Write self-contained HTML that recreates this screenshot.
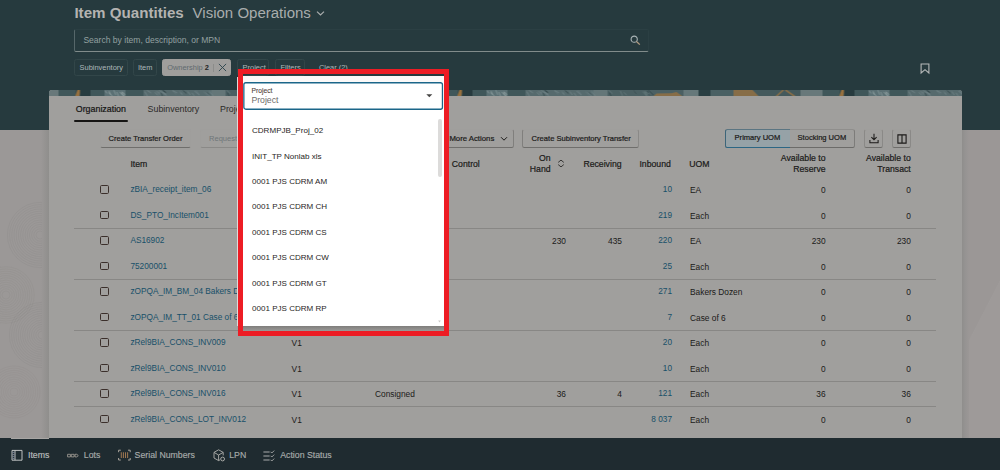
<!DOCTYPE html>
<html>
<head>
<meta charset="utf-8">
<title>Item Quantities</title>
<style>
*{box-sizing:border-box;margin:0;padding:0}
html,body{width:1000px;height:470px;overflow:hidden}
body{position:relative;background:#9b9897;font-family:"Liberation Sans",sans-serif;color:#1b1a19;font-size:8.35px}
.abs,.t{position:absolute}
.t{white-space:nowrap;line-height:1;transform:translateY(-50%)}
.r{transform:translate(-100%,-50%)}
/* header */
#hdr{left:0;top:0;width:1000px;height:130px;background:#263a3e}
#title{left:74.4px;top:12.8px;font-size:15.15px;font-weight:bold;color:#b4b3b1}
#org{left:192.6px;top:12.8px;font-size:15.03px;color:#a9adad}
#search{left:74px;top:28.5px;width:575px;height:23px;border:1px solid #2b3f43;border-bottom:1px solid #818c8b;border-left:1px solid #56676a;border-radius:2px}
#ph{left:83.4px;top:40.2px;font-size:8.56px;color:#93a0a0}
.chip{position:absolute;top:59px;height:17px;border:1px solid #324649;border-radius:2.5px}
.chip span{position:absolute;top:50%;white-space:nowrap;line-height:1;transform:translateY(-50%);font-size:7.45px;color:#adb8ba}
/* card */
#bgR{left:962px;top:130px;width:38px;height:308px;background:linear-gradient(90deg,#8f8e8c 0,#959392 3px,#9b9796 7px,#9b9796 100%)}
#shadowL{left:41px;top:130px;width:8px;height:308px;background:linear-gradient(90deg,rgba(140,139,137,0),#8f8e8c)}
#card{left:49px;top:90px;width:913px;height:348px;background:#a09f9d;border-radius:3px 3px 0 0;overflow:hidden}
#banner{left:0;top:0;width:913px;height:6.4px}
.tab{font-size:8.86px;color:#2b2a28}
.btn{position:absolute;top:129px;height:18.6px;border:1px solid #9f9e9c;border-bottom:1px solid #6f6e6c;border-radius:2.5px}
.btn span,.seg span{position:absolute;top:calc(50% + 0.7px);white-space:nowrap;line-height:1;transform:translateY(-50%);font-size:7.55px;color:#1b1a19;-webkit-text-stroke:0.2px #1b1a19}
.th{font-size:8.7px;color:#1b1a19;-webkit-text-stroke:0.2px #1b1a19}
.lnk{color:#185069;font-size:8.27px}
.sep{position:absolute;left:74px;width:862px;height:1px;background:#888785}
.cb{position:absolute;left:100.2px;width:8.8px;height:8.6px;border:1px solid #3b2f2b;border-radius:1.6px}
/* nav */
#nav{left:0;top:437.6px;width:1000px;height:32.4px;background:#1f2b30}
.nv{font-size:8.75px;color:#a7abab;-webkit-text-stroke:0.15px #a7abab}
/* popup */
#red{left:238px;top:69px;width:211px;height:267px;border:5px solid #ed1c24}
#pop{left:243px;top:76px;width:201px;height:250.3px;background:#fff}
#popL{left:237px;top:76.5px;width:1px;height:249.5px;background:#dddbd9}
#popsh{left:243px;top:326.3px;width:201px;height:4.7px;background:linear-gradient(180deg,#7f7e7c,#9a9997)}
#poptop{left:243px;top:76px;width:201px;height:6.2px;background:#fbf9f8}
#field{left:243.2px;top:82.2px;width:199.6px;height:27.6px;border:1px solid #1d6a8b;border-radius:2.5px;background:#fff}
.li{font-size:8.06px;color:#1f1e1d;left:252px}
</style>
</head>
<body>
<div id="hdr" class="abs"></div>
<div id="title" class="t">Item Quantities</div>
<div id="org" class="t">Vision Operations</div>
<svg class="abs" style="left:316.2px;top:9.6px" width="9" height="7" viewBox="0 0 9 7"><path d="M1 1.6 L4.5 5 L8 1.6" fill="none" stroke="#a9adad" stroke-width="1.2"/></svg>
<div id="search" class="abs"></div>
<div id="ph" class="t">Search by item, description, or MPN</div>
<svg class="abs" style="left:630px;top:35.3px" width="11" height="11" viewBox="0 0 11 11"><circle cx="4.2" cy="4.2" r="3.1" fill="none" stroke="#aab4b6" stroke-width="1.1"/><path d="M6.5 6.5 L9.8 9.6" stroke="#b09a80" stroke-width="1.3" fill="none"/></svg>

<div class="chip" style="left:74px;width:53.6px"><span style="left:4.6px">Subinventory</span></div>
<div class="chip" style="left:132.6px;width:24.6px"><span style="left:4.4px">Item</span></div>
<div class="chip" style="left:162px;width:69.4px;background:#9f9e9c;border-color:#9f9e9c"><span style="left:4.2px;color:#5f6a6f">Ownership <b style="color:#262626">2</b></span>
 <i style="position:absolute;left:49.8px;top:4px;width:1px;height:7.6px;background:#8c8c8a"></i>
 <svg style="position:absolute;left:55px;top:3.4px" width="9" height="9" viewBox="0 0 9 9"><path d="M0.9 0.9 L8.1 8.1 M8.1 0.9 L0.9 8.1" stroke="#2f474f" stroke-width="0.95" fill="none"/></svg>
</div>
<div class="chip" style="left:237px;width:32.4px"><span style="left:4.6px">Project</span></div>
<div class="chip" style="left:275.2px;width:29.6px"><span style="left:4.2px">Filters</span></div>
<div class="t" style="left:319px;top:67.6px;font-size:7.4px;color:#adb8ba">Clear (2)</div>
<svg class="abs" style="left:919.5px;top:62.5px" width="10" height="12" viewBox="0 0 10 12"><path d="M1.1 1 H8.9 V10 L5 6.7 L1.1 10 Z" fill="none" stroke="#b6b9b9" stroke-width="1.1" stroke-linejoin="miter"/></svg>

<div id="bgR" class="abs"></div>
<svg class="abs" style="left:0;top:130px" width="42" height="308" viewBox="0 0 42 308"><g fill="none" stroke="rgba(110,108,106,0.22)" stroke-width="0.5"><circle cx="40" cy="105" r="4.0"/><circle cx="40" cy="105" r="6.2"/><circle cx="40" cy="105" r="8.4"/><circle cx="40" cy="105" r="10.6"/><circle cx="40" cy="105" r="12.8"/><circle cx="40" cy="105" r="15.0"/><circle cx="40" cy="105" r="17.2"/><circle cx="40" cy="105" r="19.4"/><circle cx="40" cy="105" r="21.6"/><circle cx="40" cy="105" r="23.8"/><circle cx="40" cy="105" r="26.0"/><circle cx="40" cy="105" r="28.2"/><circle cx="40" cy="105" r="30.4"/><circle cx="40" cy="105" r="32.6"/></g><g fill="none" stroke="rgba(110,108,106,0.2)" stroke-width="0.5"><circle cx="6" cy="165" r="4.0"/><circle cx="6" cy="165" r="6.2"/><circle cx="6" cy="165" r="8.4"/><circle cx="6" cy="165" r="10.6"/><circle cx="6" cy="165" r="12.8"/><circle cx="6" cy="165" r="15.0"/><circle cx="6" cy="165" r="17.2"/><circle cx="6" cy="165" r="19.4"/><circle cx="6" cy="165" r="21.6"/><circle cx="6" cy="165" r="23.8"/><circle cx="6" cy="165" r="26.0"/><circle cx="6" cy="165" r="28.2"/></g><g fill="none" stroke="rgba(110,108,106,0.22)" stroke-width="0.5"><circle cx="42" cy="205" r="4.0"/><circle cx="42" cy="205" r="6.2"/><circle cx="42" cy="205" r="8.4"/><circle cx="42" cy="205" r="10.6"/><circle cx="42" cy="205" r="12.8"/><circle cx="42" cy="205" r="15.0"/><circle cx="42" cy="205" r="17.2"/><circle cx="42" cy="205" r="19.4"/><circle cx="42" cy="205" r="21.6"/><circle cx="42" cy="205" r="23.8"/><circle cx="42" cy="205" r="26.0"/><circle cx="42" cy="205" r="28.2"/><circle cx="42" cy="205" r="30.4"/><circle cx="42" cy="205" r="32.6"/></g><g fill="none" stroke="rgba(110,108,106,0.16)" stroke-width="0.5"><circle cx="14" cy="262" r="4.0"/><circle cx="14" cy="262" r="6.2"/><circle cx="14" cy="262" r="8.4"/><circle cx="14" cy="262" r="10.6"/><circle cx="14" cy="262" r="12.8"/><circle cx="14" cy="262" r="15.0"/><circle cx="14" cy="262" r="17.2"/><circle cx="14" cy="262" r="19.4"/><circle cx="14" cy="262" r="21.6"/><circle cx="14" cy="262" r="23.8"/><circle cx="14" cy="262" r="26.0"/></g></svg>
<svg class="abs" style="left:969px;top:130px" width="31" height="308" viewBox="0 0 31 308"><path d="M31 150 L0 210 V308 H31 Z" fill="rgba(255,255,255,0.035)"/></svg>
<div id="shadowL" class="abs"></div>
<div id="card" class="abs"><svg id="banner" class="abs" style="left:0;top:0" width="913" height="6.4" viewBox="0 0 913 6.4" preserveAspectRatio="none"><defs><pattern id="bp" x="-12.5" y="0" width="382" height="7" patternUnits="userSpaceOnUse"><rect x="0.0" y="0" width="22.3" height="7" fill="#68787a"/><rect x="22.0" y="0" width="17.3" height="7" fill="#40575a"/><rect x="39.0" y="0" width="4.8" height="7" fill="#364b4e"/><path d="M41 0 L45 0 L42.4 7 L38.4 7 Z" fill="#96703f"/><rect x="43.5" y="0" width="10.8" height="7" fill="#273b3f"/><rect x="54.0" y="0" width="14.3" height="7" fill="#40575a"/><rect x="68.0" y="0" width="21.3" height="7" fill="#5b7074"/><rect x="89.0" y="0" width="18.3" height="7" fill="#40575a"/><rect x="107.0" y="0" width="68.3" height="7" fill="#566a6d"/><rect x="175.0" y="0" width="14.3" height="7" fill="#647678"/><rect x="189.0" y="0" width="45.3" height="7" fill="#4b6063"/><rect x="234.0" y="0" width="31.3" height="7" fill="#4b6063"/><rect x="265.0" y="0" width="15.3" height="7" fill="#66787a"/><rect x="280.0" y="0" width="12.3" height="7" fill="#2a3f43"/><rect x="292.0" y="0" width="23.3" height="7" fill="#4a6063"/><rect x="315.0" y="0" width="19.3" height="7" fill="#876d47"/><rect x="334.0" y="0" width="3.5" height="7" fill="#44595c"/><rect x="337.0" y="0" width="45.3" height="7" fill="#44595c"/><path d="M234 7 L238 3.6 L253 3.2 L258 2 L265 7 Z" fill="#876d47"/><path d="M334 0 L334 7 L341 7 Z" fill="#876d47"/><path d="M357 7 L365 0 M367 0 L377 7" stroke="#876d47" stroke-width="1.6" fill="none"/><path d="M122.6 0.3 l3.2 2.5" stroke="#708386" stroke-width="0.8"/><path d="M108.3 1.6 l2.9 5.0" stroke="#708386" stroke-width="0.8"/><path d="M121.6 1.6 l2.8 2.5" stroke="#708386" stroke-width="0.8"/><path d="M124.3 2.8 l2.1 3.9" stroke="#2e4346" stroke-width="0.8"/><path d="M159.8 0.6 l2.9 3.9" stroke="#62767a" stroke-width="0.8"/><path d="M170.4 2.5 l3.1 4.5" stroke="#2e4346" stroke-width="0.8"/><path d="M151.3 1.5 l2.5 3.4" stroke="#708386" stroke-width="0.8"/><path d="M169.3 2.5 l4.8 4.5" stroke="#708386" stroke-width="0.8"/><path d="M167.0 1.7 l4.6 4.5" stroke="#62767a" stroke-width="0.8"/><path d="M119.9 1.3 l2.9 3.4" stroke="#708386" stroke-width="0.8"/><path d="M127.1 2.4 l2.1 2.1" stroke="#62767a" stroke-width="0.8"/><path d="M172.8 1.6 l3.9 4.1" stroke="#708386" stroke-width="0.8"/><path d="M172.8 0.6 l3.2 2.6" stroke="#62767a" stroke-width="0.8"/><path d="M136.1 0.6 l3.3 3.8" stroke="#62767a" stroke-width="0.8"/><path d="M143.9 2.7 l2.3 2.2" stroke="#708386" stroke-width="0.8"/><path d="M125.3 1.7 l4.6 2.4" stroke="#708386" stroke-width="0.8"/><path d="M126.2 0.1 l3.1 2.2" stroke="#2e4346" stroke-width="0.8"/><path d="M155.5 2.9 l2.1 2.9" stroke="#708386" stroke-width="0.8"/><path d="M158.2 1.2 l4.8 3.9" stroke="#708386" stroke-width="0.8"/><path d="M126.4 0.6 l3.3 2.4" stroke="#2e4346" stroke-width="0.8"/><path d="M146.5 0.5 l3.7 3.1" stroke="#2e4346" stroke-width="0.8"/><path d="M118.2 2.4 l3.1 2.9" stroke="#708386" stroke-width="0.8"/><path d="M136.0 0.6 l4.7 2.3" stroke="#708386" stroke-width="0.8"/><path d="M110.6 0.5 l4.0 2.4" stroke="#708386" stroke-width="0.8"/><path d="M143.1 1.7 l3.0 2.1" stroke="#62767a" stroke-width="0.8"/><path d="M126.3 3.0 l4.0 2.6" stroke="#708386" stroke-width="0.8"/><path d="M72.6 1.2 l1.6 3.3" stroke="#8d9d9f" stroke-width="0.7"/><path d="M72.7 2.7 l3.2 3.5" stroke="#8d9d9f" stroke-width="0.7"/><path d="M68.6 0.8 l2.0 2.6" stroke="#8d9d9f" stroke-width="0.7"/><path d="M72.4 2.6 l1.8 2.2" stroke="#8d9d9f" stroke-width="0.7"/><path d="M85.6 1.7 l3.5 3.2" stroke="#8d9d9f" stroke-width="0.7"/><path d="M85.1 2.0 l3.1 4.2" stroke="#8d9d9f" stroke-width="0.7"/><path d="M77.4 0.3 l1.9 4.6" stroke="#8d9d9f" stroke-width="0.7"/><path d="M85.1 2.8 l2.2 4.0" stroke="#8d9d9f" stroke-width="0.7"/><path d="M83.2 1.9 l3.1 3.6" stroke="#8d9d9f" stroke-width="0.7"/><path d="M80.4 2.1 l2.0 4.8" stroke="#8d9d9f" stroke-width="0.7"/><path d="M230.1 0.2 l4.9 4.9" stroke="#2e4346" stroke-width="0.8"/><path d="M190.9 2.7 l2.4 4.9" stroke="#2e4346" stroke-width="0.8"/><path d="M226.4 2.1 l3.4 3.4" stroke="#63777a" stroke-width="0.8"/><path d="M228.9 0.7 l2.0 4.8" stroke="#2e4346" stroke-width="0.8"/><path d="M215.2 0.8 l3.2 4.3" stroke="#63777a" stroke-width="0.8"/><path d="M226.7 1.7 l4.6 2.6" stroke="#63777a" stroke-width="0.8"/><path d="M224.2 1.7 l4.4 4.7" stroke="#63777a" stroke-width="0.8"/><path d="M190.1 0.1 l3.8 3.5" stroke="#63777a" stroke-width="0.8"/><path d="M215.1 0.4 l3.1 4.3" stroke="#2e4346" stroke-width="0.8"/><path d="M201.8 1.0 l2.2 4.9" stroke="#63777a" stroke-width="0.8"/><path d="M205.4 2.4 l2.9 2.7" stroke="#63777a" stroke-width="0.8"/><path d="M225.8 1.2 l2.2 4.7" stroke="#63777a" stroke-width="0.8"/></pattern></defs><rect x="0" y="0" width="913" height="6.4" fill="url(#bp)"/></svg></div>

<!-- tabs -->
<div class="t tab" style="left:75.8px;top:108.6px;color:#151413;-webkit-text-stroke:0.2px #151413">Organization</div>
<div class="abs" style="left:74.4px;top:120px;width:53.4px;height:2px;border-radius:1px;background:#161514"></div>
<div class="t tab" style="left:147.6px;top:108.6px">Subinventory</div>
<div class="t tab" style="left:220px;top:108.6px">Project</div>

<!-- toolbar -->
<div class="btn" style="left:100px;width:91px"><span style="left:7.6px">Create Transfer Order</span></div>
<div class="btn" style="left:200px;width:60px;border-bottom-color:#8a8987"><span style="left:8px;color:#6f7679;-webkit-text-stroke:0">Request</span></div>
<div class="btn" style="left:440px;width:73.8px;border-right-color:#807f7d"><span style="left:8.4px;font-size:7.78px">More Actions</span>
 <svg style="position:absolute;left:59.2px;top:6.1px" width="8" height="6" viewBox="0 0 8 6"><path d="M1 1.2 L4 4.2 L7 1.2" fill="none" stroke="#1b1a19" stroke-width="1"/></svg></div>
<div class="btn" style="left:522px;width:117px;border-left-color:#807f7d;border-right-color:#8a8987"><span style="left:8.6px;font-size:7.6px">Create Subinventory Transfer</span></div>

<div class="seg abs" style="left:725.2px;top:129px;width:130.2px;height:18.6px;border:1px solid #7d7c7a;border-top-color:#8f8e8c;border-bottom-color:#6c6b69;border-radius:2.5px">
 <div style="position:absolute;left:-1px;top:-1px;width:64.6px;height:18.6px;background:#96a2a7;border:1px solid #3d6579;border-top-color:#5b7582;border-bottom-color:#2c6684;border-right:none;border-radius:2.5px 0 0 2.5px"></div>
 <span style="left:8.4px;top:calc(50% + 0.2px)">Primary UOM</span><span style="left:71.4px;top:calc(50% + 0.2px)">Stocking UOM</span>
</div>
<div class="btn" style="left:863.8px;width:19.4px;border-left-color:#8a8987;border-right-color:#8a8987">
 <svg style="position:absolute;left:4.2px;top:3px" width="10" height="11" viewBox="0 0 10 11"><path d="M5 0.8 V6.6 M2.4 4.2 L5 6.8 L7.6 4.2 M0.9 7 V9.8 H9.1 V7" fill="none" stroke="#1b1a19" stroke-width="1.05"/></svg></div>
<div class="btn" style="left:892.2px;width:18.6px;border-left-color:#8a8987;border-right-color:#8a8987">
 <svg style="position:absolute;left:3.6px;top:3.6px" width="10" height="10" viewBox="0 0 10 10"><path d="M0.9 0.9 H9.1 V9.1 H0.9 Z M5 0.9 V9.1" fill="none" stroke="#1b1a19" stroke-width="1.1"/></svg></div>

<!-- table header -->
<div class="t th" style="left:130.4px;top:163.5px">Item</div>
<div class="t th" style="left:451.8px;top:163.5px">Control</div>
<div class="t th r" style="left:550.6px;top:158px">On</div>
<div class="t th r" style="left:550.6px;top:168.7px">Hand</div>
<svg class="abs" style="left:556.6px;top:159.4px" width="8" height="9" viewBox="0 0 8 9"><path d="M1.2 3.4 L4 1.1 L6.8 3.4 M1.2 5.6 L4 7.9 L6.8 5.6" fill="none" stroke="#2a2928" stroke-width="0.9"/></svg>
<div class="t th" style="left:583.4px;top:163.5px">Receiving</div>
<div class="t th" style="left:639.4px;top:163.5px">Inbound</div>
<div class="t th" style="left:689.2px;top:163.5px">UOM</div>
<div class="t th r" style="left:825.6px;top:158px">Available to</div>
<div class="t th r" style="left:825.6px;top:168.7px">Reserve</div>
<div class="t th r" style="left:910.8px;top:158px">Available to</div>
<div class="t th r" style="left:910.8px;top:168.7px">Transact</div>

<!-- rows -->
<div class="cb" style="top:185.0px"></div>
<div class="t lnk" style="left:130.4px;top:190.0px">zBIA_receipt_item_06</div>
<div class="t r lnk" style="left:672px;top:190.0px">10</div>
<div class="t" style="left:690px;top:190.0px">EA</div>
<div class="t r" style="left:825.6px;top:190.0px">0</div>
<div class="t r" style="left:910.8px;top:190.0px">0</div>
<div class="cb" style="top:210.5px"></div>
<div class="t lnk" style="left:130.4px;top:215.5px">DS_PTO_IncItem001</div>
<div class="t r lnk" style="left:672px;top:215.5px">219</div>
<div class="t" style="left:690px;top:215.5px">Each</div>
<div class="t r" style="left:825.6px;top:215.5px">0</div>
<div class="t r" style="left:910.8px;top:215.5px">0</div>
<div class="cb" style="top:236.0px"></div>
<div class="t lnk" style="left:130.4px;top:241.0px">AS16902</div>
<div class="t r" style="left:566px;top:241.0px">230</div>
<div class="t r" style="left:622px;top:241.0px">435</div>
<div class="t r lnk" style="left:672px;top:241.0px">220</div>
<div class="t" style="left:690px;top:241.0px">EA</div>
<div class="t r" style="left:825.6px;top:241.0px">230</div>
<div class="t r" style="left:910.8px;top:241.0px">230</div>
<div class="cb" style="top:261.5px"></div>
<div class="t lnk" style="left:130.4px;top:266.5px">75200001</div>
<div class="t r lnk" style="left:672px;top:266.5px">25</div>
<div class="t" style="left:690px;top:266.5px">Each</div>
<div class="t r" style="left:825.6px;top:266.5px">0</div>
<div class="t r" style="left:910.8px;top:266.5px">0</div>
<div class="cb" style="top:287.0px"></div>
<div class="t lnk" style="left:130.4px;top:292.0px">zOPQA_IM_BM_04 Bakers Dozen</div>
<div class="t r lnk" style="left:672px;top:292.0px">271</div>
<div class="t" style="left:690px;top:292.0px">Bakers Dozen</div>
<div class="t r" style="left:825.6px;top:292.0px">0</div>
<div class="t r" style="left:910.8px;top:292.0px">0</div>
<div class="cb" style="top:312.5px"></div>
<div class="t lnk" style="left:130.4px;top:317.5px">zOPQA_IM_TT_01 Case of 6</div>
<div class="t r lnk" style="left:672px;top:317.5px">7</div>
<div class="t" style="left:690px;top:317.5px">Case of 6</div>
<div class="t r" style="left:825.6px;top:317.5px">0</div>
<div class="t r" style="left:910.8px;top:317.5px">0</div>
<div class="cb" style="top:338.0px"></div>
<div class="t lnk" style="left:130.4px;top:343.0px">zRel9BIA_CONS_INV009</div>
<div class="t" style="left:291.6px;top:343.0px">V1</div>
<div class="t r lnk" style="left:672px;top:343.0px">20</div>
<div class="t" style="left:690px;top:343.0px">Each</div>
<div class="t r" style="left:825.6px;top:343.0px">0</div>
<div class="t r" style="left:910.8px;top:343.0px">0</div>
<div class="cb" style="top:363.5px"></div>
<div class="t lnk" style="left:130.4px;top:368.5px">zRel9BIA_CONS_INV010</div>
<div class="t" style="left:291.6px;top:368.5px">V1</div>
<div class="t r lnk" style="left:672px;top:368.5px">10</div>
<div class="t" style="left:690px;top:368.5px">Each</div>
<div class="t r" style="left:825.6px;top:368.5px">0</div>
<div class="t r" style="left:910.8px;top:368.5px">0</div>
<div class="cb" style="top:389.0px"></div>
<div class="t lnk" style="left:130.4px;top:394.0px">zRel9BIA_CONS_INV016</div>
<div class="t" style="left:291.6px;top:394.0px">V1</div>
<div class="t" style="left:375px;top:394.0px">Consigned</div>
<div class="t r" style="left:566px;top:394.0px">36</div>
<div class="t r" style="left:622px;top:394.0px">4</div>
<div class="t r lnk" style="left:672px;top:394.0px">121</div>
<div class="t" style="left:690px;top:394.0px">Each</div>
<div class="t r" style="left:825.6px;top:394.0px">36</div>
<div class="t r" style="left:910.8px;top:394.0px">36</div>
<div class="cb" style="top:414.5px"></div>
<div class="t lnk" style="left:130.4px;top:419.5px">zRel9BIA_CONS_LOT_INV012</div>
<div class="t" style="left:291.6px;top:419.5px">V1</div>
<div class="t r lnk" style="left:672px;top:419.5px">8 037</div>
<div class="t" style="left:690px;top:419.5px">Each</div>
<div class="t r" style="left:825.6px;top:419.5px">0</div>
<div class="t r" style="left:910.8px;top:419.5px">0</div>
<div class="sep" style="top:227.8px"></div>
<div class="sep" style="top:278.8px"></div>
<div class="sep" style="top:329.8px"></div>
<div class="sep" style="top:380.8px"></div>
<div class="sep" style="top:406.1px"></div>
<!-- /rows -->

<!-- nav -->
<div id="nav" class="abs"></div>
<div class="abs" style="left:11px;top:437.6px;width:38px;height:1.5px;background:#a8a6a4"></div>
<svg class="abs" style="left:11px;top:449.2px" width="12" height="12" viewBox="0 0 12 12"><path d="M1 1.4 H11 V11.2 H1 Z M4 1.4 V11.2" fill="none" stroke="#c6c8c8" stroke-width="0.95" stroke-linejoin="miter"/><path d="M1.6 3.4 H3.4 M1.6 5.4 H3.4 M1.6 7.4 H3.4 M1.6 9.4 H3.4" stroke="#8d97b0" stroke-width="0.8"/></svg>
<div class="t nv" style="left:28px;top:455.2px;color:#c4c6c6">Items</div>
<svg class="abs" style="left:66.6px;top:453.4px" width="12" height="5" viewBox="0 0 12 5"><path d="M0.6 1.3 H3.4 V3.9 H0.6 Z M4.3 1.3 H7.1 V3.9 H4.3 Z M8 1.3 H9.8 L11.3 2.6 L9.8 3.9 H8 Z" fill="none" stroke="#a9a49c" stroke-width="0.8"/></svg>
<div class="t nv" style="left:83.8px;top:455.2px">Lots</div>
<svg class="abs" style="left:117.6px;top:449.4px" width="13" height="12" viewBox="0 0 13 12"><path d="M0.6 3.2 V1.2 H2.8 M10 1.2 H12.2 V3.2 M12.2 9 V11 H10 M2.8 11 H0.6 V9" fill="none" stroke="#a9a49c" stroke-width="1"/><path d="M3.3 3.3 V8.9 M5.4 3.3 V8.9 M7.5 3.3 V8.9 M9.6 3.3 V8.9" stroke="#9b7550" stroke-width="1.05"/></svg>
<div class="t nv" style="left:134.6px;top:455.2px">Serial Numbers</div>
<svg class="abs" style="left:213px;top:449.4px" width="13" height="13" viewBox="0 0 13 13"><path d="M1 3.4 L5.6 0.8 L10.2 3.4 V6.4 M1 3.4 V9 L5.6 11.6 V6 L1 3.4 M5.6 6 L10.2 3.4 M5.6 11.6 L7 10.8" fill="none" stroke="#a9aaa6" stroke-width="0.95" stroke-linejoin="round"/><circle cx="9.6" cy="10" r="1.9" fill="none" stroke="#a9aaa6" stroke-width="1"/></svg>
<div class="t nv" style="left:229.2px;top:455.2px">LPN</div>
<svg class="abs" style="left:262.6px;top:449.8px" width="12" height="12" viewBox="0 0 12 12"><path d="M0.4 2 H6.6 M0.4 6 H6.6 M0.4 10 H6.6" stroke="#aaacac" stroke-width="1" fill="none"/><path d="M7.6 1.8 L8.8 3 L11.2 0.6 M7.6 5.8 L8.8 7 L11.2 4.6 M7.6 9.8 L8.8 11 L11.2 8.6" stroke="#aaacac" stroke-width="0.9" fill="none"/></svg>
<div class="t nv" style="left:280.2px;top:455.2px">Action Status</div>

<!-- popup -->
<div id="red" class="abs"></div>
<div id="pop" class="abs"></div>
<div id="popL" class="abs"></div>
<div id="popsh" class="abs"></div>
<div id="poptop" class="abs"></div>
<svg class="abs" style="left:242px;top:81px" width="203" height="31" viewBox="0 0 203 31"><rect x="1.85" y="1.75" width="198.6" height="26.5" rx="2" ry="2" fill="#fff" stroke="#1b6689" stroke-width="1.3"/></svg>
<div class="t" style="left:251.6px;top:91.3px;font-size:6.7px;color:#4f4038;-webkit-text-stroke:0.1px #4f4038">Project</div>
<div class="t" style="left:251.4px;top:100px;font-size:8.7px;color:#6d6c6a">Project</div>
<svg class="abs" style="left:425.6px;top:93.5px" width="7" height="4" viewBox="0 0 7 4"><path d="M0.3 0.2 H6.3 L3.3 3.2 Z" fill="#454443"/></svg>
<div class="t li" style="top:131.1px">CDRMPJB_Proj_02</div>
<div class="t li" style="top:156.5px">INIT_TP Nonlab xls</div>
<div class="t li" style="top:182.0px">0001 PJS CDRM AM</div>
<div class="t li" style="top:207.4px">0001 PJS CDRM CH</div>
<div class="t li" style="top:232.9px">0001 PJS CDRM CS</div>
<div class="t li" style="top:258.3px">0001 PJS CDRM CW</div>
<div class="t li" style="top:283.8px">0001 PJS CDRM GT</div>
<div class="t li" style="top:309.3px">0001 PJS CDRM RP</div>
<div class="abs" style="left:438px;top:118.8px;width:4px;height:58.6px;border-radius:2px;background:#dcdbda"></div>
<svg class="abs" style="left:438.4px;top:319.6px" width="3" height="3" viewBox="0 0 3 3"><path d="M0.2 0.4 H2.8 L1.5 2.6 Z" fill="#c9c8c7"/></svg>
</body>
</html>
